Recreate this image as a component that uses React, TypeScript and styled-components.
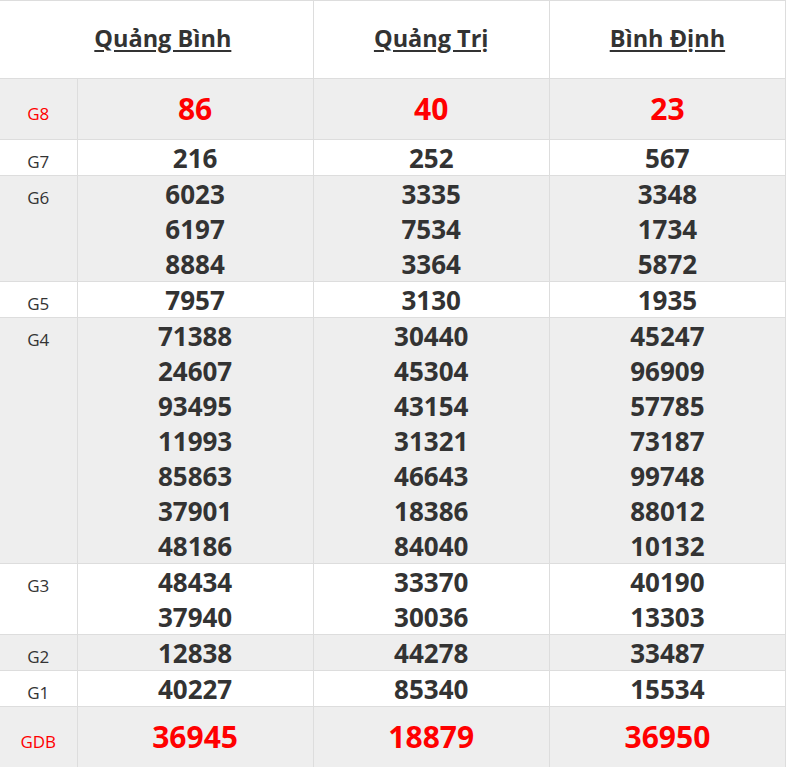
import React from "react";
import styled, { createGlobalStyle } from "styled-components";

const Global = createGlobalStyle`
  html, body { margin: 0; padding: 0; background: #fff; }
  body { font-family: "Open Sans", "Liberation Sans", sans-serif; color: #333; }
`;

const Table = styled.table`
  width: 786px;
  border-collapse: collapse;
  table-layout: fixed;
  border-top: 1px solid #ddd;
`;

const HeadCell = styled.th<{ $shift?: number }>`
  height: 73px;
  padding: 0 0 4px ${(p) => p.$shift ?? 0}px;
  border-right: 1px solid #ddd;
  border-bottom: 1px solid #ddd;
  font-size: 23.5px;
  font-weight: 700;
  text-decoration: underline;
  text-underline-offset: 3px;
  text-decoration-thickness: 2px;
  color: #333;
  vertical-align: middle;
`;

const Row = styled.tr<{ $alt: boolean }>`
  background: ${(p) => (p.$alt ? "#eeeeee" : "#ffffff")};
`;

const Label = styled.td<{ $red: boolean; $tall: boolean }>`
  padding: ${(p) => (p.$tall ? "11px 0 14px" : "0")};
  border-bottom: 1px solid #ddd;
  border-right: 1px solid #ddd;
  text-align: center;
  vertical-align: baseline;
  font-size: 17px;
  color: ${(p) => (p.$red ? "#ff0000" : "#333")};
`;

const Cell = styled.td<{ $tall: boolean }>`
  padding: ${(p) => (p.$tall ? "11px 0 14px" : "0")};
  border-bottom: 1px solid #ddd;
  border-right: 1px solid #ddd;
  text-align: center;
  vertical-align: baseline;
`;

const Num = styled.div<{ $red: boolean }>`
  font-weight: 700;
  font-size: ${(p) => (p.$red ? "30px" : "26px")};
  line-height: 35px;
  padding-top: 1px;
  margin-bottom: -1px;
  color: ${(p) => (p.$red ? "#ff0000" : "#333")};
`;

type Prize = { name: string; red?: boolean; tall?: boolean; values: string[][] };

const prizes: Prize[] = [
  { name: "G8", red: true, tall: true, values: [["86"], ["40"], ["23"]] },
  { name: "G7", values: [["216"], ["252"], ["567"]] },
  {
    name: "G6",
    values: [
      ["6023", "6197", "8884"],
      ["3335", "7534", "3364"],
      ["3348", "1734", "5872"],
    ],
  },
  { name: "G5", values: [["7957"], ["3130"], ["1935"]] },
  {
    name: "G4",
    values: [
      ["71388", "24607", "93495", "11993", "85863", "37901", "48186"],
      ["30440", "45304", "43154", "31321", "46643", "18386", "84040"],
      ["45247", "96909", "57785", "73187", "99748", "88012", "10132"],
    ],
  },
  {
    name: "G3",
    values: [
      ["48434", "37940"],
      ["33370", "30036"],
      ["40190", "13303"],
    ],
  },
  { name: "G2", values: [["12838"], ["44278"], ["33487"]] },
  { name: "G1", values: [["40227"], ["85340"], ["15534"]] },
  { name: "GDB", red: true, tall: true, values: [["36945"], ["18879"], ["36950"]] },
];

const provinces = ["Quảng Bình", "Quảng Trị", "Bình Định"];

export default function App() {
  return (
    <>
      <Global />
      <Table>
        <colgroup>
          <col style={{ width: 77 }} />
          <col />
          <col />
          <col />
        </colgroup>
        <thead>
          <tr>
            <HeadCell colSpan={2} $shift={13}>
              {provinces[0]}
            </HeadCell>
            {provinces.slice(1).map((p) => (
              <HeadCell key={p}>{p}</HeadCell>
            ))}
          </tr>
        </thead>
        <tbody>
          {prizes.map((prize, i) => (
            <Row key={prize.name} $alt={i % 2 === 0}>
              <Label $red={!!prize.red} $tall={!!prize.tall}>
                {prize.name}
              </Label>
              {prize.values.map((col, j) => (
                <Cell key={j} $tall={!!prize.tall}>
                  {col.map((v, k) => (
                    <Num key={k} $red={!!prize.red}>
                      {v}
                    </Num>
                  ))}
                </Cell>
              ))}
            </Row>
          ))}
        </tbody>
      </Table>
    </>
  );
}
